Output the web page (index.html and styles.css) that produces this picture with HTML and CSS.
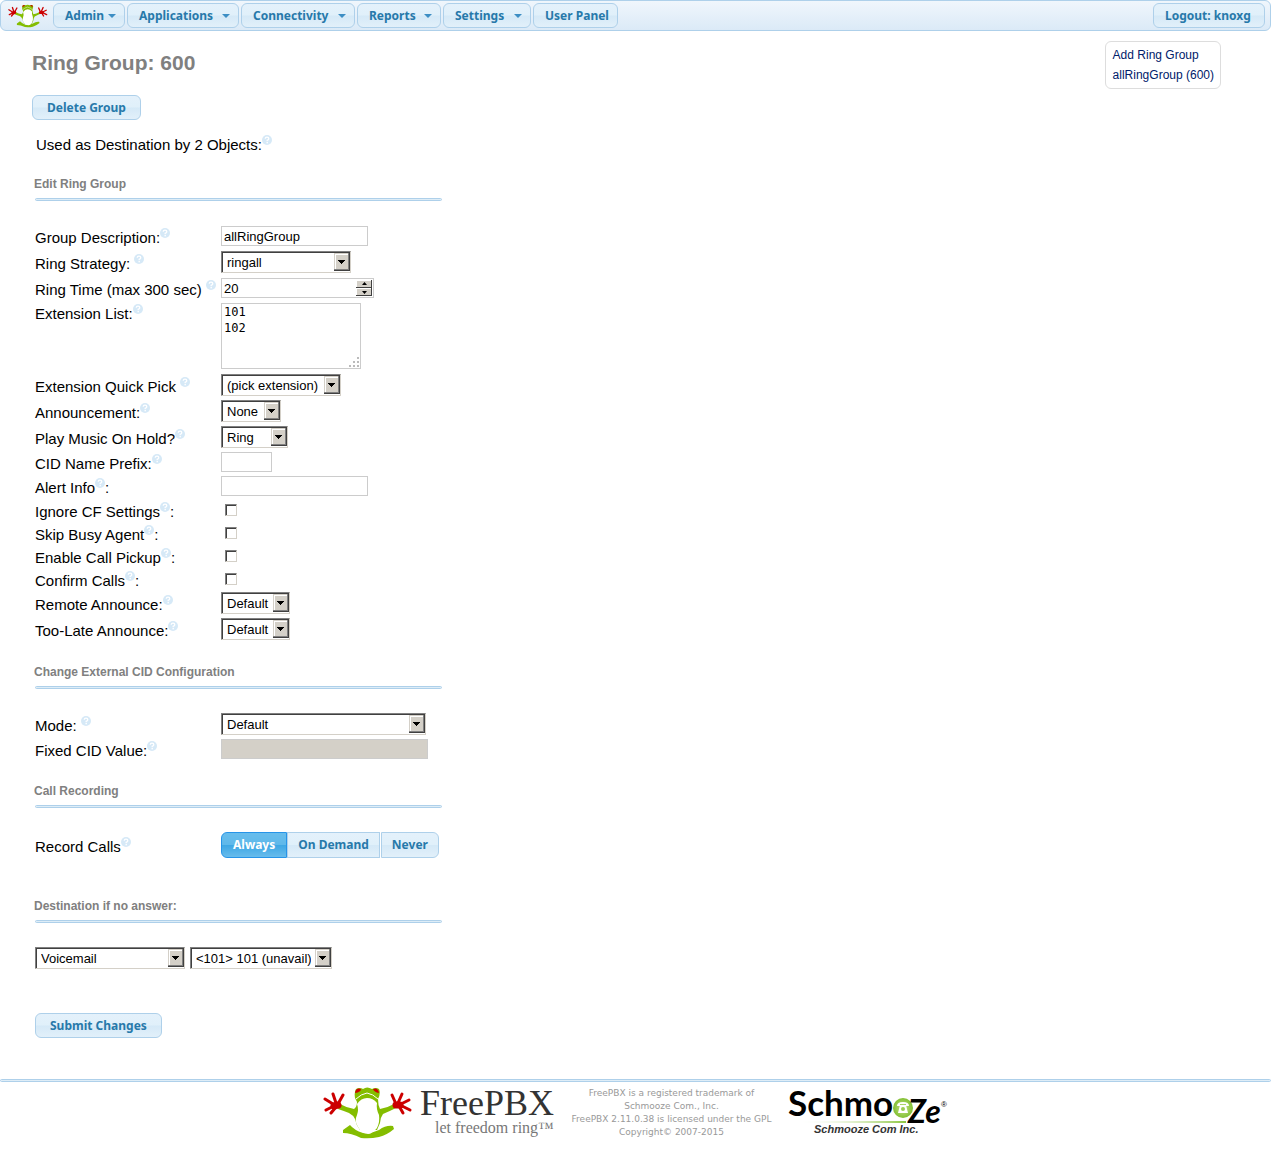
FILE: index.html
```html
<!DOCTYPE html>
<html lang="en">
<head>
<meta charset="UTF-8">
<title>FreePBX Administration</title>
<link rel="stylesheet" href="styles.css">
</head>
<body>

<!-- shared drawings -->
<svg class="sprites" aria-hidden="true">
  <symbol id="help" viewBox="0 0 10 10">
    <circle cx="5" cy="5" r="5" fill="#d6e9f7"/>
    <path d="M3.2 3.8 Q3.3 2.2 5 2.2 Q6.8 2.2 6.8 3.7 Q6.8 4.6 5.2 5.3 V6.2" fill="none" stroke="#fff" stroke-width="1.3"/>
    <rect x="4.5" y="7" width="1.4" height="1.3" fill="#fff"/>
  </symbol>
  <symbol id="frog" viewBox="0 0 90 52">
    <path d="M20 43 L27 38 Q31 43 40 46 Q48 47 56 43 Q63 38 70 39 L71 42 Q64 48 56 50 Q47 52 38 51 Q28 46 20 46Z" fill="#84bd00"/>
    <path d="M17 17 Q24 21 31 22 Q34 20 34 15 L32 11 Q31 5 33 2 Q37 0 40 2 Q44 -1 49 2 Q53 0 56 2 Q58 6 55 12 Q55 18 57 22 Q64 21 71 17 L73 21 Q67 24 60 27 Q57 31 57 36 L54 43 L37 43 Q33 38 32 32 Q30 28 26 26 Q21 24 15 22Z" fill="#84bd00"/>
    <path d="M34 17 Q38 11 44 11 Q50 11 54 16 Q53 22 56 28 Q57 35 54 41 Q49 47 45 47 Q38 46 35 40 Q31 34 34 28 Q36 23 34 17Z" fill="#fff"/>
    <path d="M33 12 Q38 7 44 6 Q50 7 55 12" fill="none" stroke="#fff" stroke-width="1"/>
    <path d="M32 6 Q33 0 38 2 Q38 5 32 6Z M50 2 Q55 0 56 6 Q51 5 50 2Z" fill="#c00"/>
    <g fill="none" stroke="#c00" stroke-linecap="round">
      <path d="M15 18 L11 19 M73 18 L77 18" stroke-width="7"/>
      <path d="M10 17 L2 12 M13 16 L10 7 M15 17 L20 8 M11 19 L3 23 M13 20 L8 26" stroke-width="3"/>
      <path d="M78 17 L86 13 M75 16 L79 7 M73 17 L69 8 M77 18 L87 23 M76 19 L80 26" stroke-width="3"/>
    </g>
  </symbol>
</svg>

<nav class="header">
  <a href="#" class="header-logo" aria-label="FreePBX"><svg width="40" height="24"><use href="#frog"/></svg></a>
  <button type="button" class="btn nav-admin">Admin <i class="caret"></i></button>
  <button type="button" class="btn nav-applications">Applications <i class="caret"></i></button>
  <button type="button" class="btn nav-connectivity">Connectivity <i class="caret"></i></button>
  <button type="button" class="btn nav-reports">Reports <i class="caret"></i></button>
  <button type="button" class="btn nav-settings">Settings <i class="caret"></i></button>
  <a href="#" class="btn nav-panel">User Panel</a>
  <button type="button" class="btn logout">Logout: knoxg</button>
</nav>

<div class="page">
  <main class="content">
    <h2>Ring Group: 600</h2>
    <button type="button" class="btn delete">Delete Group</button>
    <p class="used">Used as Destination by 2 Objects:<svg class="help"><use href="#help"/></svg></p>

    <form action="#" method="post">
      <h5>Edit Ring Group</h5>
      <hr>
      <div class="row">
        <label for="grpdesc">Group Description:<svg class="help"><use href="#help"/></svg></label>
        <input type="text" id="grpdesc" class="wide" value="allRingGroup">
      </div>
      <div class="row row-select">
        <label for="strategy">Ring Strategy: <svg class="help"><use href="#help"/></svg></label>
        <select id="strategy" class="w130"><option>ringall</option></select>
      </div>
      <div class="row row-select">
        <label for="grptime">Ring Time (max 300 sec) <svg class="help"><use href="#help"/></svg></label>
        <input type="number" id="grptime" value="20">
      </div>
      <div class="row row-list">
        <label for="grplist">Extension List:<svg class="help"><use href="#help"/></svg></label>
        <textarea id="grplist">101
102</textarea>
      </div>
      <div class="row row-select">
        <label for="qpick">Extension Quick Pick <svg class="help"><use href="#help"/></svg></label>
        <select id="qpick" class="w120"><option>(pick extension)</option></select>
      </div>
      <div class="row row-select">
        <label for="annmsg">Announcement:<svg class="help"><use href="#help"/></svg></label>
        <select id="annmsg" class="w60"><option>None</option></select>
      </div>
      <div class="row row-select">
        <label for="ringing">Play Music On Hold?<svg class="help"><use href="#help"/></svg></label>
        <select id="ringing" class="w67"><option>Ring</option></select>
      </div>
      <div class="row">
        <label for="grppre">CID Name Prefix:<svg class="help"><use href="#help"/></svg></label>
        <input type="text" id="grppre" class="short">
      </div>
      <div class="row">
        <label for="alertinfo">Alert Info<svg class="help"><use href="#help"/></svg>:</label>
        <input type="text" id="alertinfo" class="wide">
      </div>
      <div class="row row-check">
        <label for="cwignore">Ignore CF Settings<svg class="help"><use href="#help"/></svg>:</label>
        <input type="checkbox" id="cwignore">
      </div>
      <div class="row row-check">
        <label for="cfignore">Skip Busy Agent<svg class="help"><use href="#help"/></svg>:</label>
        <input type="checkbox" id="cfignore">
      </div>
      <div class="row row-check">
        <label for="cpickup">Enable Call Pickup<svg class="help"><use href="#help"/></svg>:</label>
        <input type="checkbox" id="cpickup">
      </div>
      <div class="row row-check">
        <label for="needsconf">Confirm Calls<svg class="help"><use href="#help"/></svg>:</label>
        <input type="checkbox" id="needsconf">
      </div>
      <div class="row row-select">
        <label for="remotealert">Remote Announce:<svg class="help"><use href="#help"/></svg></label>
        <select id="remotealert" class="w69"><option>Default</option></select>
      </div>
      <div class="row row-select">
        <label for="toolate">Too-Late Announce:<svg class="help"><use href="#help"/></svg></label>
        <select id="toolate" class="w69"><option>Default</option></select>
      </div>

      <h5>Change External CID Configuration</h5>
      <hr>
      <div class="row row-select">
        <label for="changecid">Mode: <svg class="help"><use href="#help"/></svg></label>
        <select id="changecid" class="w205"><option>Default</option></select>
      </div>
      <div class="row">
        <label for="fixedcid">Fixed CID Value:<svg class="help"><use href="#help"/></svg></label>
        <input type="text" id="fixedcid" class="fixedcid" disabled>
      </div>

      <h5>Call Recording</h5>
      <hr>
      <div class="row row-record">
        <span class="row-label" id="reclabel">Record Calls<svg class="help"><use href="#help"/></svg></span>
        <div class="buttonset" role="radiogroup" aria-labelledby="reclabel">
          <input type="radio" name="recording" id="rec-always" checked><label for="rec-always" class="btn">Always</label>
          <input type="radio" name="recording" id="rec-demand"><label for="rec-demand" class="btn">On Demand</label>
          <input type="radio" name="recording" id="rec-never"><label for="rec-never" class="btn">Never</label>
        </div>
      </div>

      <h5>Destination if no answer:</h5>
      <hr>
      <div class="destination">
        <select class="w150" aria-label="Destination type"><option>Voicemail</option></select>
        <select class="w142" aria-label="Destination"><option>&lt;101&gt; 101 (unavail)</option></select>
      </div>

      <button type="submit" class="btn submit">Submit Changes</button>
    </form>
  </main>

  <aside class="rnav">
    <a href="#">Add Ring Group</a>
    <a href="#">allRingGroup (600)</a>
  </aside>
</div>

<hr class="footer-line">
<footer class="footer">
  <svg class="freepbx" width="232" height="54" viewBox="0 0 232 54" role="img" aria-label="FreePBX">
    <use href="#frog" width="90" height="52"/>
    <text x="97" y="28" class="brand">FreePBX</text>
    <text x="112" y="46" class="tagline">let freedom ring™</text>
  </svg>
  <div class="copyright">
    FreePBX is a registered trademark of<br>
    Schmooze Com., Inc.<br>
    FreePBX 2.11.0.38 is licensed under the GPL<br>
    Copyright© 2007-2015
  </div>
  <svg class="schmooze" width="160" height="50" viewBox="0 0 160 50" role="img" aria-label="Schmooze">
    <defs>
      <linearGradient id="swoosh"><stop offset="0" stop-color="#fff"/><stop offset="1" stop-color="#8cc63f"/></linearGradient>
      <radialGradient id="ball"><stop offset="0" stop-color="#c5e48a"/><stop offset="1" stop-color="#82bf33"/></radialGradient>
    </defs>
    <path d="M10 35 L118 34 V36 Z" fill="url(#swoosh)"/>
    <text x="0" y="29" class="schm">Schmo</text>
    <circle cx="115" cy="21" r="10" fill="url(#ball)"/>
    <path d="M109 19 Q109 15 115 15 Q121 15 121 19 H118 V17 H112 V19Z M112 18 H118 L120 26 H110Z" fill="#fff"/>
    <circle cx="115" cy="22" r="2" fill="#9bcd55"/>
    <text x="120" y="36" class="ze">Ze</text>
    <text x="153" y="20" class="reg">®</text>
    <text x="26" y="46" class="com">Schmooze Com Inc.</text>
  </svg>
</footer>

</body>
</html>
```
FILE: styles.css
```css
body {
  margin: 0;
  background: #fff;
  color: #000;
  font-family: "Liberation Sans", Arial, sans-serif;
  font-size: 15px;
}

.sprites {
  display: none;
}

/* buttons */
.btn {
  box-sizing: border-box;
  display: inline-flex;
  align-items: center;
  justify-content: space-between;
  height: 25px;
  padding: 0 11px;
  border: 1px solid #aed0ea;
  border-radius: 6px;
  background: linear-gradient(#e4f1fb 0%, #e0f0fa 48%, #d5e9f7 52%, #e2f0fa 100%);
  color: #2779aa;
  font-family: "Noto Sans", "Open Sans", sans-serif;
  font-size: 12px;
  font-weight: bold;
  line-height: 16px;
  text-decoration: none;
  white-space: nowrap;
  cursor: pointer;
}

.btn:hover {
  border-color: #74b2e2;
}

.caret {
  border: 4px solid transparent;
  border-top-color: #3d8ec4;
  border-bottom-width: 0;
}

/* top menu */
.header {
  box-sizing: border-box;
  display: flex;
  gap: 2px;
  align-items: center;
  height: 31px;
  padding: 0 5px 0 7px;
  border: 1px solid #aed0ea;
  border-radius: 6px;
  background: linear-gradient(#f0f6fc, #dbeaf7);
}

.header-logo {
  width: 43px;
  height: 24px;
}

.header .btn {
  padding: 0 8px 0 11px;
}

.nav-admin { width: 72px; }
.nav-applications { width: 112px; }
.nav-connectivity { width: 114px; }
.nav-reports { width: 84px; }
.nav-settings { width: 88px; }
.nav-panel { width: 85px; }

.header .logout {
  width: 112px;
  margin-left: auto;
}

/* page */
.page {
  display: flex;
  justify-content: space-between;
  align-items: flex-start;
  padding: 10px 50px 41px 35px;
}

.content {
  flex: 0 1 407px;
}

h2 {
  margin: 8px 0 18px -3px;
  color: #808080;
  font-size: 21px;
  line-height: 28px;
}

.delete {
  margin-left: -3px;
  padding: 0 14px;
}

.used {
  margin: 15px 0 22px 1px;
  line-height: 18px;
}

.help {
  width: 10px;
  height: 10px;
  vertical-align: 5px;
}

h5 {
  margin: 22px 0 6px -1px;
  color: #808080;
  font-size: 12px;
  line-height: 16px;
}

hr {
  box-sizing: border-box;
  height: 3px;
  margin: 0 0 22px;
  border: 1px solid #aed0ea;
  border-radius: 2px;
  background: #deedf7;
}

.rnav {
  display: flex;
  flex-direction: column;
  padding: 3px 6px 3px 7px;
  border: 1px solid #ddd;
  border-radius: 6px;
}

.rnav a {
  color: #00206a;
  font-size: 12px;
  line-height: 20px;
  text-decoration: none;
}

/* form */
.row {
  display: grid;
  grid-template-columns: 186px 1fr;
  align-items: center;
  justify-items: start;
  min-height: 24px;
}

hr + .row {
  min-height: 26px;
}

.row > label, .row-label {
  padding-top: 3px;
  line-height: 18px;
  white-space: nowrap;
}

.row-select { min-height: 26px; }
.row-check { min-height: 23px; }

.row-list {
  align-items: start;
  min-height: 71px;
}

.row.row-record {
  min-height: 30px;
  margin-bottom: 38px;
}

input, select, textarea {
  box-sizing: border-box;
  margin: 0;
  background: #fff;
  color: #000;
  font-family: "Liberation Sans", Arial, sans-serif;
  font-size: 13px;
}

input[type=text], input[type=number] {
  height: 20px;
  padding: 0 2px;
  border: 1px solid #ccc;
}

input.wide { width: 147px; }
input.short { width: 51px; }
input.fixedcid { width: 207px; }

input.fixedcid:disabled {
  background: #d4d0c8;
}

input[type=number] {
  width: 153px;
  appearance: textfield;
  background: #fff url("data:image/svg+xml,%3Csvg xmlns='http://www.w3.org/2000/svg' width='16' height='16'%3E%3Cpath fill='%23404040' d='M0 0h16v16H0z'/%3E%3Cpath fill='%23fff' d='M0 0h15v7H0zM0 8h15v7H0z'/%3E%3Cpath fill='%23d4d0c8' d='M1 1h14v6H1zM1 9h14v6H1z'/%3E%3Cpath d='M6 5h5L8.500 2zM6 11h5l-2.500 3z'/%3E%3C/svg%3E") no-repeat right 1px center;
}

textarea {
  width: 140px;
  height: 66px;
  margin-top: 2px;
  padding: 0 2px;
  border: 1px solid #ccc;
  resize: none;
  font-family: "DejaVu Sans Mono", monospace;
  font-size: 12px;
  line-height: 16px;
  background: #fff url("data:image/svg+xml,%3Csvg xmlns='http://www.w3.org/2000/svg' width='12' height='12'%3E%3Cpath fill='%23bbb' d='M9 1h2v2H9zM5 5h2v2H5zM9 5h2v2H9zM1 9h2v2H1zM5 9h2v2H5zM9 9h2v2H9z'/%3E%3C/svg%3E") no-repeat right bottom;
}

select {
  height: 22px;
  padding: 0 20px 0 5px;
  appearance: none;
  border: 1px solid #808080;
  border-right-color: #d4d0c8;
  border-bottom-color: #d4d0c8;
  border-radius: 0;
  box-shadow: inset 1px 1px #404040;
  background: #fff url("data:image/svg+xml,%3Csvg xmlns='http://www.w3.org/2000/svg' width='16' height='18'%3E%3Cpath fill='%23404040' d='M0 0h16v18H0z'/%3E%3Cpath fill='%23808080' d='M0 0h15v17H0z'/%3E%3Cpath fill='%23d4d0c8' d='M0 0h14v16H0z'/%3E%3Cpath fill='%23fff' d='M1 1h13v1H2v14H1z'/%3E%3Cpath d='M4 7h7v1h-1v1H9v1H8v1H7v-1H6V9H5V8H4z'/%3E%3C/svg%3E") no-repeat right top 1px;
}

.w60 { width: 60px; }
.w67 { width: 67px; }
.w69 { width: 69px; }
.w120 { width: 120px; }
.w130 { width: 130px; }
.w142 { width: 142px; }
.w150 { width: 150px; }
.w205 { width: 205px; }

input[type=checkbox] {
  width: 12px;
  height: 12px;
  margin-left: 4px;
  appearance: none;
  border: 1px solid #808080;
  border-right-color: #d4d0c8;
  border-bottom-color: #d4d0c8;
  box-shadow: inset 1px 1px #404040;
}

input[type=checkbox]:checked {
  background: #404040;
}

.buttonset {
  display: flex;
}

.buttonset input {
  position: absolute;
  opacity: 0;
}

.buttonset .btn {
  height: 26px;
  padding: 0 10px;
  border-radius: 0;
}

.buttonset .btn:first-of-type {
  padding: 0 11px;
  border-radius: 6px 0 0 6px;
}

.buttonset .btn:last-of-type {
  margin-left: 1px;
  border-radius: 0 6px 6px 0;
}

.buttonset input:checked + .btn {
  border-color: #2694e8;
  background: linear-gradient(#67bdec 0%, #5fb8ea 48%, #3ea7e4 52%, #68bcec 100%);
  color: #fff;
}

.destination {
  display: flex;
  gap: 5px;
  padding: 2px 0;
}

.submit {
  margin-top: 42px;
  padding: 0 14px;
}

/* footer */
.footer-line {
  margin: 0;
}

.footer {
  display: flex;
  justify-content: center;
  gap: 10px;
  padding: 5px 0 30px;
}

.footer svg {
  overflow: visible;
}

.copyright {
  min-width: 213px;
  color: #999;
  font-family: "DejaVu Sans", Verdana, sans-serif;
  font-size: 9px;
  line-height: 13px;
  text-align: center;
}

.brand, .tagline {
  font-family: "Liberation Serif", serif;
}

.brand {
  font-size: 36px;
  fill: #333;
}

.tagline {
  font-size: 16px;
  fill: #777;
}

.schm, .ze {
  font-family: Lato, sans-serif;
  font-size: 35px;
  font-weight: bold;
}

.ze {
  font-size: 32px;
  font-style: italic;
}

.reg {
  font-size: 8px;
}

.com {
  font-size: 11px;
  font-style: italic;
  font-weight: bold;
  fill: #333;
}
```
